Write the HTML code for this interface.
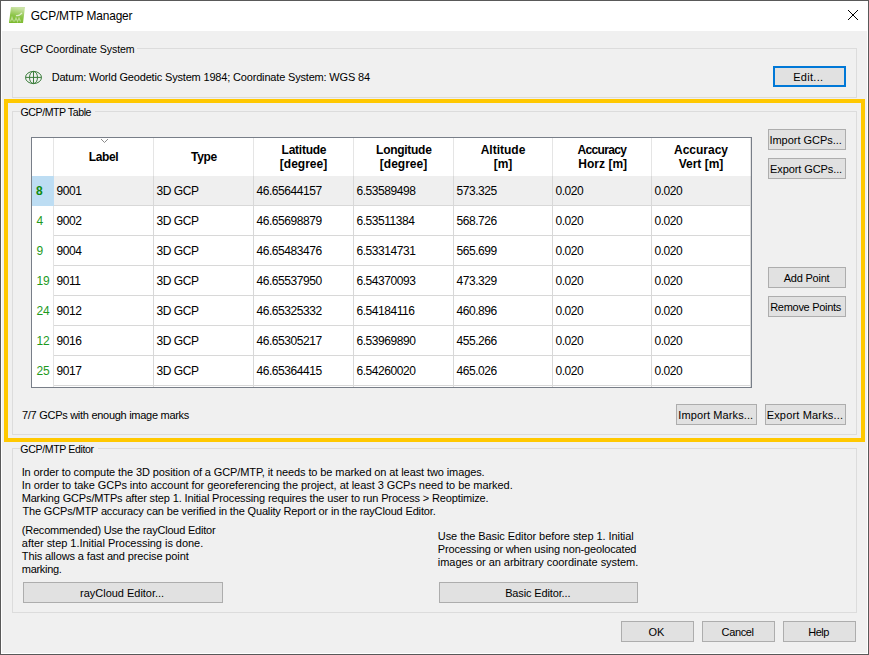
<!DOCTYPE html><html><head><meta charset="utf-8"><style>
html,body{margin:0;padding:0;}
body{width:869px;height:655px;overflow:hidden;position:relative;background:#F0F0F0;font-family:"Liberation Sans", sans-serif;}
.t{position:absolute;white-space:pre;line-height:13px;font-family:"Liberation Sans", sans-serif;}
.r{position:absolute;box-sizing:border-box;}
</style></head><body>
<div class="r" style="left:0px;top:0px;width:869px;height:655px;background:#F0F0F0;border:1px solid #595959;"></div>
<div class="r" style="left:1px;top:1px;width:867px;height:653px;border:1px solid #FFFFFF;"></div>
<div class="r" style="left:1px;top:1px;width:867px;height:30px;background:#FFFFFF;"></div>
<svg class="r" style="left:8px;top:6px" width="18" height="18" viewBox="0 0 18 18">
<defs><linearGradient id="ig" x1="0.3" y1="0" x2="0.1" y2="1"><stop offset="0" stop-color="#CBE3A6"/><stop offset="0.5" stop-color="#8DC548"/><stop offset="1" stop-color="#79B92A"/></linearGradient></defs>
<polygon points="3,1 17,1 15,17 1,17" fill="url(#ig)"/>
<path d="M2.5,15.5 L4,11.5 L5.5,15.5 M6.5,15.5 L8,12 L9.5,15.5 L11,12 L12.5,15.5" stroke="#CFE6B0" stroke-width="1.2" fill="none" opacity="0.7"/>
<path d="M8,9.5 Q10.5,10.5 14,7" stroke="#EEF6E2" stroke-width="1.2" fill="none" opacity="0.85"/>
</svg>
<div id="title" class="t" style="left:30.64px;top:10px;font-size:11.9px;font-weight:400;color:#000;letter-spacing:-0.165px;line-height:13px">GCP/MTP Manager</div>
<svg class="r" style="left:847px;top:9px" width="12" height="12" viewBox="0 0 12 12">
<path d="M1,1 L11,11 M11,1 L1,11" stroke="#000" stroke-width="1"/></svg>
<div class="r" style="left:12px;top:48px;width:845px;height:50px;border:1px solid #DCDCDC;"></div>
<div class="r" style="left:20px;top:48px;width:117px;height:1px;background:#F0F0F0;"></div>
<div id="g1" class="t" style="left:20.32px;top:43px;font-size:10.6px;font-weight:400;color:#000;letter-spacing:-0.072px;line-height:13px">GCP Coordinate System</div>
<svg class="r" style="left:24px;top:70px" width="19" height="15" viewBox="0 0 19 15">
<g fill="none" stroke="#3B7D3B" stroke-width="1">
<ellipse cx="9.5" cy="7.5" rx="8" ry="6.1"/>
<ellipse cx="9.5" cy="7.5" rx="4" ry="6.1"/>
<line x1="9.5" y1="1.4" x2="9.5" y2="13.6"/>
<line x1="1.5" y1="7.4" x2="17.5" y2="7.4"/>
</g></svg>
<div id="datum" class="t" style="left:51.64px;top:71px;font-size:11px;font-weight:400;color:#000;letter-spacing:-0.174px;line-height:13px">Datum: World Geodetic System 1984; Coordinate System: WGS 84</div>
<div class="r" style="left:773px;top:66px;width:73px;height:21px;background:#E1E1E1;border:2px solid #0078D7;"></div>
<div id="b_edit" class="t" style="left:771.8px;width:73px;text-align:center;top:71px;font-size:11px;font-weight:400;color:#000;letter-spacing:0.3px;line-height:13px">Edit...</div>
<div class="r" style="left:4px;top:99px;width:861px;height:343px;border:4px solid #FFC800;"></div>
<div class="r" style="left:12px;top:111px;width:845px;height:324px;border:1px solid #DCDCDC;"></div>
<div class="r" style="left:20px;top:111px;width:75px;height:1px;background:#F0F0F0;"></div>
<div id="g2" class="t" style="left:20.48px;top:106px;font-size:10.6px;font-weight:400;color:#000;letter-spacing:-0.428px;line-height:13px">GCP/MTP Table</div>
<div class="r" style="left:31px;top:137px;width:721px;height:251px;background:#FFFFFF;border:1px solid #787E88;"></div>
<div class="r" style="left:54px;top:176px;width:697px;height:29px;background:#EFEFEF;"></div>
<div class="r" style="left:32px;top:176px;width:22px;height:30px;background:#BDDDF3;"></div>
<div class="r" style="left:53px;top:138px;width:1px;height:38px;background:#E5E5E5;"></div>
<div class="r" style="left:153px;top:138px;width:1px;height:38px;background:#E5E5E5;"></div>
<div class="r" style="left:253px;top:138px;width:1px;height:38px;background:#E5E5E5;"></div>
<div class="r" style="left:353px;top:138px;width:1px;height:38px;background:#E5E5E5;"></div>
<div class="r" style="left:453px;top:138px;width:1px;height:38px;background:#E5E5E5;"></div>
<div class="r" style="left:552px;top:138px;width:1px;height:38px;background:#E5E5E5;"></div>
<div class="r" style="left:651px;top:138px;width:1px;height:38px;background:#E5E5E5;"></div>
<div class="r" style="left:750px;top:138px;width:1px;height:38px;background:#E5E5E5;"></div>
<div class="r" style="left:53px;top:206px;width:1px;height:181px;background:#E3E3E3;"></div>
<div class="r" style="left:153px;top:176px;width:1px;height:211px;background:#D8D8D8;"></div>
<div class="r" style="left:253px;top:176px;width:1px;height:211px;background:#D8D8D8;"></div>
<div class="r" style="left:353px;top:176px;width:1px;height:211px;background:#D8D8D8;"></div>
<div class="r" style="left:453px;top:176px;width:1px;height:211px;background:#D8D8D8;"></div>
<div class="r" style="left:552px;top:176px;width:1px;height:211px;background:#D8D8D8;"></div>
<div class="r" style="left:651px;top:176px;width:1px;height:211px;background:#D8D8D8;"></div>
<div class="r" style="left:750px;top:176px;width:1px;height:211px;background:#D8D8D8;"></div>
<div class="r" style="left:54px;top:205px;width:697px;height:1px;background:#D8D8D8;"></div>
<div class="r" style="left:54px;top:235px;width:697px;height:1px;background:#D8D8D8;"></div>
<div class="r" style="left:54px;top:265px;width:697px;height:1px;background:#D8D8D8;"></div>
<div class="r" style="left:54px;top:295px;width:697px;height:1px;background:#D8D8D8;"></div>
<div class="r" style="left:54px;top:325px;width:697px;height:1px;background:#D8D8D8;"></div>
<div class="r" style="left:54px;top:355px;width:697px;height:1px;background:#D8D8D8;"></div>
<div class="r" style="left:54px;top:385px;width:697px;height:1px;background:#D8D8D8;"></div>
<svg class="r" style="left:100px;top:138px" width="9" height="6" viewBox="0 0 9 6">
<path d="M1,1 L4.5,4.5 L8,1" stroke="#8A8A8A" stroke-width="1" fill="none"/></svg>
<div id="h0a" class="t" style="left:54.0px;width:99px;text-align:center;top:151px;font-size:12px;font-weight:700;color:#000;letter-spacing:-0.4px;line-height:13px">Label</div>
<div id="h1a" class="t" style="left:154.48px;width:99px;text-align:center;top:151px;font-size:12px;font-weight:700;color:#000;letter-spacing:-0.315px;line-height:13px">Type</div>
<div id="h2a" class="t" style="left:254.4px;width:99px;text-align:center;top:144px;font-size:12px;font-weight:700;color:#000;letter-spacing:-0.255px;line-height:13px">Latitude</div>
<div id="h2b" class="t" style="left:254px;width:99px;text-align:center;top:158px;font-size:12px;font-weight:700;color:#000;letter-spacing:0px;line-height:13px">[degree]</div>
<div id="h3a" class="t" style="left:354.32px;width:99px;text-align:center;top:144px;font-size:12px;font-weight:700;color:#000;letter-spacing:-0.28px;line-height:13px">Longitude</div>
<div id="h3b" class="t" style="left:354px;width:99px;text-align:center;top:158px;font-size:12px;font-weight:700;color:#000;letter-spacing:0px;line-height:13px">[degree]</div>
<div id="h4a" class="t" style="left:454px;width:98px;text-align:center;top:144px;font-size:12px;font-weight:700;color:#000;letter-spacing:0px;line-height:13px">Altitude</div>
<div id="h4b" class="t" style="left:454px;width:98px;text-align:center;top:158px;font-size:12px;font-weight:700;color:#000;letter-spacing:0px;line-height:13px">[m]</div>
<div id="h5a" class="t" style="left:552.84px;width:98px;text-align:center;top:144px;font-size:12px;font-weight:700;color:#000;letter-spacing:-0.654px;line-height:13px">Accuracy</div>
<div id="h5b" class="t" style="left:553.72px;width:98px;text-align:center;top:158px;font-size:12px;font-weight:700;color:#000;letter-spacing:0.023px;line-height:13px">Horz [m]</div>
<div id="h6a" class="t" style="left:652px;width:98px;text-align:center;top:144px;font-size:12px;font-weight:700;color:#000;letter-spacing:0px;line-height:13px">Accuracy</div>
<div id="h6b" class="t" style="left:652px;width:98px;text-align:center;top:158px;font-size:12px;font-weight:700;color:#000;letter-spacing:0px;line-height:13px">Vert [m]</div>
<div id="rh0" class="t" style="left:36px;top:185px;font-size:12px;font-weight:700;color:#0E8A0E;letter-spacing:-0.2px;line-height:13px">8</div>
<div id="c0_0" class="t" style="left:56.5px;top:185px;font-size:12px;font-weight:400;color:#000;letter-spacing:-0.45px;line-height:13px">9001</div>
<div id="c0_1" class="t" style="left:156.5px;top:185px;font-size:12px;font-weight:400;color:#000;letter-spacing:-0.45px;line-height:13px">3D GCP</div>
<div id="c0_2" class="t" style="left:256.5px;top:185px;font-size:12px;font-weight:400;color:#000;letter-spacing:-0.45px;line-height:13px">46.65644157</div>
<div id="c0_3" class="t" style="left:356.5px;top:185px;font-size:12px;font-weight:400;color:#000;letter-spacing:-0.45px;line-height:13px">6.53589498</div>
<div id="c0_4" class="t" style="left:456.5px;top:185px;font-size:12px;font-weight:400;color:#000;letter-spacing:-0.45px;line-height:13px">573.325</div>
<div id="c0_5" class="t" style="left:555.5px;top:185px;font-size:12px;font-weight:400;color:#000;letter-spacing:-0.45px;line-height:13px">0.020</div>
<div id="c0_6" class="t" style="left:654.5px;top:185px;font-size:12px;font-weight:400;color:#000;letter-spacing:-0.45px;line-height:13px">0.020</div>
<div id="rh1" class="t" style="left:36.5px;top:215px;font-size:12px;font-weight:400;color:#1E9A1E;letter-spacing:-0.2px;line-height:13px">4</div>
<div id="c1_0" class="t" style="left:56.5px;top:215px;font-size:12px;font-weight:400;color:#000;letter-spacing:-0.45px;line-height:13px">9002</div>
<div id="c1_1" class="t" style="left:156.5px;top:215px;font-size:12px;font-weight:400;color:#000;letter-spacing:-0.45px;line-height:13px">3D GCP</div>
<div id="c1_2" class="t" style="left:256.5px;top:215px;font-size:12px;font-weight:400;color:#000;letter-spacing:-0.45px;line-height:13px">46.65698879</div>
<div id="c1_3" class="t" style="left:356.5px;top:215px;font-size:12px;font-weight:400;color:#000;letter-spacing:-0.45px;line-height:13px">6.53511384</div>
<div id="c1_4" class="t" style="left:456.5px;top:215px;font-size:12px;font-weight:400;color:#000;letter-spacing:-0.45px;line-height:13px">568.726</div>
<div id="c1_5" class="t" style="left:555.5px;top:215px;font-size:12px;font-weight:400;color:#000;letter-spacing:-0.45px;line-height:13px">0.020</div>
<div id="c1_6" class="t" style="left:654.5px;top:215px;font-size:12px;font-weight:400;color:#000;letter-spacing:-0.45px;line-height:13px">0.020</div>
<div id="rh2" class="t" style="left:36.5px;top:245px;font-size:12px;font-weight:400;color:#1E9A1E;letter-spacing:-0.2px;line-height:13px">9</div>
<div id="c2_0" class="t" style="left:56.5px;top:245px;font-size:12px;font-weight:400;color:#000;letter-spacing:-0.45px;line-height:13px">9004</div>
<div id="c2_1" class="t" style="left:156.5px;top:245px;font-size:12px;font-weight:400;color:#000;letter-spacing:-0.45px;line-height:13px">3D GCP</div>
<div id="c2_2" class="t" style="left:256.5px;top:245px;font-size:12px;font-weight:400;color:#000;letter-spacing:-0.45px;line-height:13px">46.65483476</div>
<div id="c2_3" class="t" style="left:356.5px;top:245px;font-size:12px;font-weight:400;color:#000;letter-spacing:-0.45px;line-height:13px">6.53314731</div>
<div id="c2_4" class="t" style="left:456.5px;top:245px;font-size:12px;font-weight:400;color:#000;letter-spacing:-0.45px;line-height:13px">565.699</div>
<div id="c2_5" class="t" style="left:555.5px;top:245px;font-size:12px;font-weight:400;color:#000;letter-spacing:-0.45px;line-height:13px">0.020</div>
<div id="c2_6" class="t" style="left:654.5px;top:245px;font-size:12px;font-weight:400;color:#000;letter-spacing:-0.45px;line-height:13px">0.020</div>
<div id="rh3" class="t" style="left:36.5px;top:275px;font-size:12px;font-weight:400;color:#1E9A1E;letter-spacing:-0.2px;line-height:13px">19</div>
<div id="c3_0" class="t" style="left:56.5px;top:275px;font-size:12px;font-weight:400;color:#000;letter-spacing:-0.45px;line-height:13px">9011</div>
<div id="c3_1" class="t" style="left:156.5px;top:275px;font-size:12px;font-weight:400;color:#000;letter-spacing:-0.45px;line-height:13px">3D GCP</div>
<div id="c3_2" class="t" style="left:256.5px;top:275px;font-size:12px;font-weight:400;color:#000;letter-spacing:-0.45px;line-height:13px">46.65537950</div>
<div id="c3_3" class="t" style="left:356.5px;top:275px;font-size:12px;font-weight:400;color:#000;letter-spacing:-0.45px;line-height:13px">6.54370093</div>
<div id="c3_4" class="t" style="left:456.5px;top:275px;font-size:12px;font-weight:400;color:#000;letter-spacing:-0.45px;line-height:13px">473.329</div>
<div id="c3_5" class="t" style="left:555.5px;top:275px;font-size:12px;font-weight:400;color:#000;letter-spacing:-0.45px;line-height:13px">0.020</div>
<div id="c3_6" class="t" style="left:654.5px;top:275px;font-size:12px;font-weight:400;color:#000;letter-spacing:-0.45px;line-height:13px">0.020</div>
<div id="rh4" class="t" style="left:36.5px;top:305px;font-size:12px;font-weight:400;color:#1E9A1E;letter-spacing:-0.2px;line-height:13px">24</div>
<div id="c4_0" class="t" style="left:56.5px;top:305px;font-size:12px;font-weight:400;color:#000;letter-spacing:-0.45px;line-height:13px">9012</div>
<div id="c4_1" class="t" style="left:156.5px;top:305px;font-size:12px;font-weight:400;color:#000;letter-spacing:-0.45px;line-height:13px">3D GCP</div>
<div id="c4_2" class="t" style="left:256.5px;top:305px;font-size:12px;font-weight:400;color:#000;letter-spacing:-0.45px;line-height:13px">46.65325332</div>
<div id="c4_3" class="t" style="left:356.5px;top:305px;font-size:12px;font-weight:400;color:#000;letter-spacing:-0.45px;line-height:13px">6.54184116</div>
<div id="c4_4" class="t" style="left:456.5px;top:305px;font-size:12px;font-weight:400;color:#000;letter-spacing:-0.45px;line-height:13px">460.896</div>
<div id="c4_5" class="t" style="left:555.5px;top:305px;font-size:12px;font-weight:400;color:#000;letter-spacing:-0.45px;line-height:13px">0.020</div>
<div id="c4_6" class="t" style="left:654.5px;top:305px;font-size:12px;font-weight:400;color:#000;letter-spacing:-0.45px;line-height:13px">0.020</div>
<div id="rh5" class="t" style="left:36.5px;top:335px;font-size:12px;font-weight:400;color:#1E9A1E;letter-spacing:-0.2px;line-height:13px">12</div>
<div id="c5_0" class="t" style="left:56.5px;top:335px;font-size:12px;font-weight:400;color:#000;letter-spacing:-0.45px;line-height:13px">9016</div>
<div id="c5_1" class="t" style="left:156.5px;top:335px;font-size:12px;font-weight:400;color:#000;letter-spacing:-0.45px;line-height:13px">3D GCP</div>
<div id="c5_2" class="t" style="left:256.5px;top:335px;font-size:12px;font-weight:400;color:#000;letter-spacing:-0.45px;line-height:13px">46.65305217</div>
<div id="c5_3" class="t" style="left:356.5px;top:335px;font-size:12px;font-weight:400;color:#000;letter-spacing:-0.45px;line-height:13px">6.53969890</div>
<div id="c5_4" class="t" style="left:456.5px;top:335px;font-size:12px;font-weight:400;color:#000;letter-spacing:-0.45px;line-height:13px">455.266</div>
<div id="c5_5" class="t" style="left:555.5px;top:335px;font-size:12px;font-weight:400;color:#000;letter-spacing:-0.45px;line-height:13px">0.020</div>
<div id="c5_6" class="t" style="left:654.5px;top:335px;font-size:12px;font-weight:400;color:#000;letter-spacing:-0.45px;line-height:13px">0.020</div>
<div id="rh6" class="t" style="left:36.5px;top:365px;font-size:12px;font-weight:400;color:#1E9A1E;letter-spacing:-0.2px;line-height:13px">25</div>
<div id="c6_0" class="t" style="left:56.5px;top:365px;font-size:12px;font-weight:400;color:#000;letter-spacing:-0.45px;line-height:13px">9017</div>
<div id="c6_1" class="t" style="left:156.5px;top:365px;font-size:12px;font-weight:400;color:#000;letter-spacing:-0.45px;line-height:13px">3D GCP</div>
<div id="c6_2" class="t" style="left:256.5px;top:365px;font-size:12px;font-weight:400;color:#000;letter-spacing:-0.45px;line-height:13px">46.65364415</div>
<div id="c6_3" class="t" style="left:356.5px;top:365px;font-size:12px;font-weight:400;color:#000;letter-spacing:-0.45px;line-height:13px">6.54260020</div>
<div id="c6_4" class="t" style="left:456.5px;top:365px;font-size:12px;font-weight:400;color:#000;letter-spacing:-0.45px;line-height:13px">465.026</div>
<div id="c6_5" class="t" style="left:555.5px;top:365px;font-size:12px;font-weight:400;color:#000;letter-spacing:-0.45px;line-height:13px">0.020</div>
<div id="c6_6" class="t" style="left:654.5px;top:365px;font-size:12px;font-weight:400;color:#000;letter-spacing:-0.45px;line-height:13px">0.020</div>
<div class="r" style="left:768px;top:129px;width:78px;height:21px;background:#E1E1E1;border:1px solid #ADADAD;"></div>
<div id="b_imp" class="t" style="left:766.64px;width:78px;text-align:center;top:134px;font-size:11px;font-weight:400;color:#000;letter-spacing:-0.032px;line-height:13px">Import GCPs...</div>
<div class="r" style="left:768px;top:158px;width:78px;height:21px;background:#E1E1E1;border:1px solid #ADADAD;"></div>
<div id="b_exp" class="t" style="left:767.04px;width:78px;text-align:center;top:163px;font-size:11px;font-weight:400;color:#000;letter-spacing:-0.09px;line-height:13px">Export GCPs...</div>
<div class="r" style="left:768px;top:267px;width:78px;height:21px;background:#E1E1E1;border:1px solid #ADADAD;"></div>
<div id="b_add" class="t" style="left:767.52px;width:78px;text-align:center;top:272px;font-size:11px;font-weight:400;color:#000;letter-spacing:-0.22px;line-height:13px">Add Point</div>
<div class="r" style="left:768px;top:296px;width:78px;height:21px;background:#E1E1E1;border:1px solid #ADADAD;"></div>
<div id="b_rem" class="t" style="left:766.64px;width:78px;text-align:center;top:301px;font-size:11px;font-weight:400;color:#000;letter-spacing:-0.287px;line-height:13px">Remove Points</div>
<div id="gcpcount" class="t" style="left:21.98px;top:409px;font-size:11px;font-weight:400;color:#000;letter-spacing:-0.281px;line-height:13px">7/7 GCPs with enough image marks</div>
<div class="r" style="left:676px;top:404px;width:81px;height:21px;background:#E1E1E1;border:1px solid #ADADAD;"></div>
<div id="b_impm" class="t" style="left:675.28px;width:81px;text-align:center;top:409px;font-size:11px;font-weight:400;color:#000;letter-spacing:0.105px;line-height:13px">Import Marks...</div>
<div class="r" style="left:765px;top:404px;width:81px;height:21px;background:#E1E1E1;border:1px solid #ADADAD;"></div>
<div id="b_expm" class="t" style="left:764.44px;width:81px;text-align:center;top:409px;font-size:11px;font-weight:400;color:#000;letter-spacing:0.173px;line-height:13px">Export Marks...</div>
<div class="r" style="left:12px;top:448px;width:845px;height:165px;border:1px solid #DCDCDC;"></div>
<div class="r" style="left:20px;top:448px;width:78px;height:1px;background:#F0F0F0;"></div>
<div id="g3" class="t" style="left:20.32px;top:443px;font-size:10.6px;font-weight:400;color:#000;letter-spacing:-0.374px;line-height:13px">GCP/MTP Editor</div>
<div id="p0" class="t" style="left:21.64px;top:466px;font-size:11px;font-weight:400;color:#000;letter-spacing:-0.1px;line-height:13px">In order to compute the 3D position of a GCP/MTP, it needs to be marked on at least two images.</div>
<div id="p1" class="t" style="left:21.64px;top:479px;font-size:11px;font-weight:400;color:#000;letter-spacing:-0.054px;line-height:13px">In order to take GCPs into account for georeferencing the project, at least 3 GCPs need to be marked.</div>
<div id="p2" class="t" style="left:21.64px;top:492px;font-size:11px;font-weight:400;color:#000;letter-spacing:-0.144px;line-height:13px">Marking GCPs/MTPs after step 1. Initial Processing requires the user to run Process &gt; Reoptimize.</div>
<div id="p3" class="t" style="left:22.44px;top:505px;font-size:11px;font-weight:400;color:#000;letter-spacing:-0.156px;line-height:13px">The GCPs/MTP accuracy can be verified in the Quality Report or in the rayCloud Editor.</div>
<div id="l0" class="t" style="left:21.8px;top:524px;font-size:11px;font-weight:400;color:#000;letter-spacing:-0.222px;line-height:13px">(Recommended) Use the rayCloud Editor</div>
<div id="l1" class="t" style="left:21.8px;top:537px;font-size:11px;font-weight:400;color:#000;letter-spacing:-0.035px;line-height:13px">after step 1.Initial Processing is done.</div>
<div id="l2" class="t" style="left:21.8px;top:550px;font-size:11px;font-weight:400;color:#000;letter-spacing:-0.123px;line-height:13px">This allows a fast and precise point</div>
<div id="l3" class="t" style="left:21.8px;top:563px;font-size:11px;font-weight:400;color:#000;letter-spacing:-0.299px;line-height:13px">marking.</div>
<div id="r0" class="t" style="left:437.8px;top:530px;font-size:11px;font-weight:400;color:#000;letter-spacing:-0.066px;line-height:13px">Use the Basic Editor before step 1. Initial</div>
<div id="r1" class="t" style="left:437.8px;top:543px;font-size:11px;font-weight:400;color:#000;letter-spacing:-0.163px;line-height:13px">Processing or when using non-geolocated</div>
<div id="r2" class="t" style="left:437.8px;top:556px;font-size:11px;font-weight:400;color:#000;letter-spacing:-0.048px;line-height:13px">images or an arbitrary coordinate system.</div>
<div class="r" style="left:23px;top:582px;width:200px;height:21px;background:#E1E1E1;border:1px solid #ADADAD;"></div>
<div id="b_ray" class="t" style="left:22.12px;width:200px;text-align:center;top:587px;font-size:11px;font-weight:400;color:#000;letter-spacing:-0.019px;line-height:13px">rayCloud Editor...</div>
<div class="r" style="left:439px;top:582px;width:199px;height:21px;background:#E1E1E1;border:1px solid #ADADAD;"></div>
<div id="b_basic" class="t" style="left:438.28px;width:199px;text-align:center;top:587px;font-size:11px;font-weight:400;color:#000;letter-spacing:-0.136px;line-height:13px">Basic Editor...</div>
<div class="r" style="left:621px;top:621px;width:73px;height:21px;background:#E1E1E1;border:1px solid #ADADAD;"></div>
<div id="b_ok" class="t" style="left:619.96px;width:73px;text-align:center;top:626px;font-size:11px;font-weight:400;color:#000;letter-spacing:0.0px;line-height:13px">OK</div>
<div class="r" style="left:702px;top:621px;width:73px;height:21px;background:#E1E1E1;border:1px solid #ADADAD;"></div>
<div id="b_cancel" class="t" style="left:701.12px;width:73px;text-align:center;top:626px;font-size:11px;font-weight:400;color:#000;letter-spacing:-0.356px;line-height:13px">Cancel</div>
<div class="r" style="left:783px;top:621px;width:73px;height:21px;background:#E1E1E1;border:1px solid #ADADAD;"></div>
<div id="b_help" class="t" style="left:782.04px;width:73px;text-align:center;top:626px;font-size:11px;font-weight:400;color:#000;letter-spacing:-0.502px;line-height:13px">Help</div>
</body></html>
